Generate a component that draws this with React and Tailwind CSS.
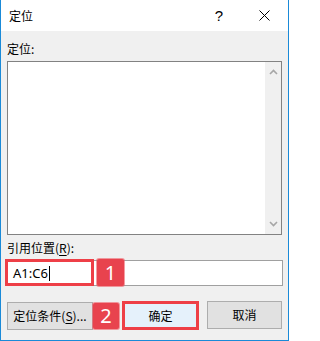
import React from "react";

const font = "font-['Noto_Sans_CJK_SC','Noto_Sans',sans-serif]";

function Chevron({ up }) {
  return (
    <svg width="9" height="6" viewBox="0 0 9 6" className="block">
      <path
        d={up ? "M1 5 L4.5 1.5 L8 5" : "M1 1 L4.5 4.5 L8 1"}
        fill="none"
        stroke="#a6a6a6"
        strokeWidth="1.6"
      />
    </svg>
  );
}

function Badge({ children, className }) {
  return (
    <div
      className={
        "absolute flex items-center justify-center rounded-[2px] bg-[#e8434e] text-white text-[20px] leading-none shadow-[0_0_0_1px_rgba(240,90,100,0.6)] font-['Noto_Sans',sans-serif] " +
        className
      }
    >
      {children}
    </div>
  );
}

export default function App() {
  return (
    <div
      className={
        "w-[289px] h-[341px] bg-[#f0f0f0] border-x border-b border-[#1a8ad8] flex flex-col text-black text-[12px] " +
        font
      }
    >
      {/* title bar */}
      <div className="h-[31px] bg-white flex items-center pl-[8px] shrink-0">
        <span className="text-[12px] leading-none">定位</span>
        <span className="ml-auto text-[15px] leading-none font-['Liberation_Sans',sans-serif] mr-[36px]">?</span>
        <svg width="11" height="11" viewBox="0 0 11 11" className="mr-[18px]">
          <path d="M0.5 0.5 L10.5 10.5 M10.5 0.5 L0.5 10.5" stroke="#000" strokeWidth="1" />
        </svg>
      </div>

      {/* body */}
      <div className="flex flex-col pl-[6px] pr-[6px] relative">
        <div className="mt-[11px] h-[14px] leading-[14px]">定位:</div>
        <div className="mt-[5px] h-[174px] w-[275px] border border-[#828282] bg-white flex">
          <div className="flex-1" />
          <div className="w-[16px] bg-[#f0f0f0] flex flex-col items-center justify-between pt-[7px] pb-[7px] mr-0">
            <Chevron up />
            <Chevron />
          </div>
        </div>
        <div className="mt-[6px] h-[14px] leading-[14px]">
          引用位置(<span className="underline underline-offset-2">R</span>):
        </div>
        <div className="relative mt-[5px] -ml-[2px] h-[26px] w-[278px] border border-[#a0a0a0] bg-white flex items-center pl-[7px]">
          <span className="text-[13px] leading-none font-['Noto_Sans',sans-serif]">A1:C6</span>
          <span className="ml-[1px] w-[1px] h-[15px] bg-black" />
          <div className="absolute left-[-1px] top-[-2px] w-[89px] h-[27px] border-[3px] border-[#ee3f47]" />
          <Badge className="left-[91px] top-[-2px] w-[27px] h-[27px]">1</Badge>
        </div>

        <div className="relative mt-[15px] flex h-[29px]">
          <div className="w-[86px] h-[28px] mt-[1px] border border-[#adadad] bg-[#e1e1e1] flex items-center justify-center">
            定位条件(<span className="underline underline-offset-2">S</span>)...
          </div>
          <div className="ml-[29px] w-[77px] h-[29px] border-[3px] border-[#ee3f47] bg-[#e5f1fb] flex items-center justify-center">
            确定
          </div>
          <div className="ml-[8px] w-[75px] h-[28px] border border-[#adadad] bg-[#e1e1e1] flex items-center justify-center">
            取消
          </div>
          <Badge className="left-[86px] top-[2px] w-[26px] h-[26px]">2</Badge>
        </div>
      </div>
    </div>
  );
}
